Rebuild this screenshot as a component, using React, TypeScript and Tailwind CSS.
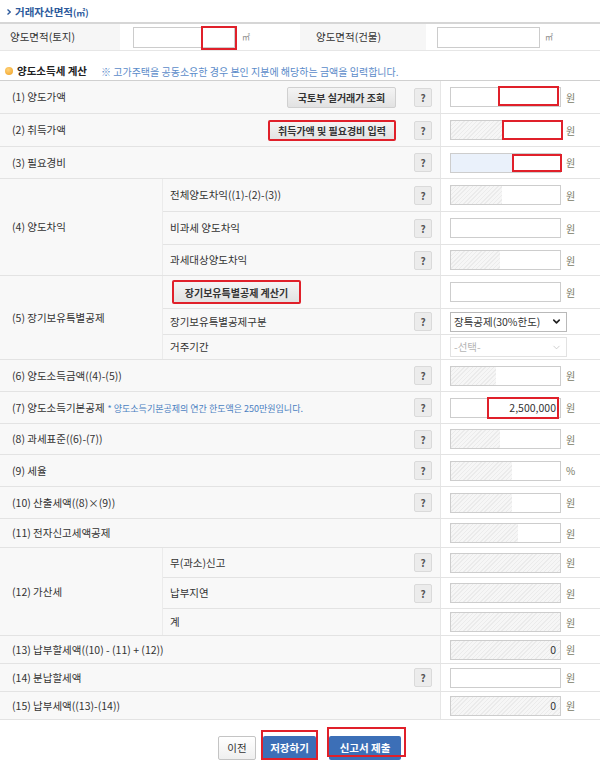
import { ChevronDown } from "lucide-react";
import type { ReactNode } from "react";

type Kind = "white" | "blue" | "part" | "full";

// red annotation box drawn on top of an input
function Mark({ cls }: { cls: string }) {
  return <div className={`absolute border-2 border-[#e0202a] ${cls}`} />;
}

function Field({
  kind = "white",
  value,
  unit = "원",
  gap = "w-[60px]",
  mark,
}: {
  kind?: Kind;
  value?: string;
  unit?: string;
  gap?: string;
  mark?: ReactNode;
}) {
  const bg =
    kind === "blue"
      ? "bg-[#eaf1fb]"
      : kind === "white"
        ? "bg-white"
        : "bg-[repeating-linear-gradient(135deg,#ebebeb_0px,#ebebeb_1px,#f6f6f6_1px,#f6f6f6_3px)]";
  return (
    <div className="flex items-center pl-[9px]">
      <div className={`relative w-[111px] h-[20px] border border-[#cdcdcd] ${bg}`}>
        {kind === "part" && <div className={`absolute right-0 top-0 h-full bg-white ${gap}`} />}
        {value && (
          <span className="absolute right-[4px] top-0 leading-[18px] text-[10.5px] text-[#333]">{value}</span>
        )}
        {mark}
      </div>
      <span className="ml-[5px] text-[10px] text-[#7a7a66]">{unit}</span>
    </div>
  );
}

function Help({ show = true }: { show?: boolean }) {
  return (
    <div className="w-[35px] flex items-center pl-[9px]">
      {show && (
        <div className="w-[18px] h-[19px] bg-[#ececec] border border-[#dadada] rounded-[2px] flex items-center justify-center text-[10px] font-bold text-[#555]">
          ?
        </div>
      )}
    </div>
  );
}

function GrayBtn({ children, cls }: { children: ReactNode; cls: string }) {
  return (
    <div
      className={`h-[21px] flex items-center justify-center rounded-[2px] bg-gradient-to-b from-[#f4f4f4] to-[#e2e2e2] text-[10px] font-bold text-[#333] ${cls}`}
    >
      {children}
    </div>
  );
}

function Row({
  h,
  label,
  right,
  help = true,
  field,
}: {
  h: string;
  label: ReactNode;
  right?: ReactNode;
  help?: boolean;
  field: ReactNode;
}) {
  return (
    <div className={`flex border-b border-[#e3e3e3] ${h}`}>
      <div className="w-[405px] flex items-center justify-between pl-[12px] pr-[9px] bg-[#f8f8f8]">
        <span>{label}</span>
        {right}
      </div>
      <div className="flex bg-[#f8f8f8]">
        <Help show={help} />
      </div>
      <div className="flex-1 flex items-center border-l border-[#e6e6e6] bg-white">{field}</div>
    </div>
  );
}

type Sub = { h: string; label?: ReactNode; help?: boolean; field: ReactNode };

function Group({ label, subs }: { label: string; subs: Sub[] }) {
  return (
    <div className="flex border-b border-[#e3e3e3]">
      <div className="w-[163px] flex items-center pl-[12px] bg-[#f8f8f8] border-r border-[#ebebeb]">{label}</div>
      <div className="flex-1 flex flex-col">
        {subs.map((s, i) => (
          <div key={i} className={`flex ${s.h} ${i < subs.length - 1 ? "border-b border-[#e3e3e3]" : ""}`}>
            <div className="w-[242px] flex items-center pl-[7px] bg-[#f8f8f8]">{s.label}</div>
            <div className="flex bg-[#f8f8f8]">
              <Help show={s.help !== false} />
            </div>
            <div className="flex-1 flex items-center border-l border-[#e6e6e6] bg-white">{s.field}</div>
          </div>
        ))}
      </div>
    </div>
  );
}

function Select({ text, disabled }: { text: string; disabled?: boolean }) {
  return (
    <div className="pl-[9px]">
      <div
        className={`w-[117px] h-[20px] border flex items-center justify-between pl-[3px] pr-[4px] text-[10.5px] ${
          disabled ? "border-[#e2e2e2] text-[#b5b5b5] bg-white" : "border-[#b9b9b9] text-[#333] bg-white"
        }`}
      >
        <span>{text}</span>
        {disabled ? (
          <ChevronDown size={11} strokeWidth={1.5} color="#bbbbbb" />
        ) : (
          <ChevronDown size={11} strokeWidth={3.5} color="#222222" />
        )}
      </div>
    </div>
  );
}

export default function App() {
  return (
    <div className="w-[600px] min-h-[764px] bg-white font-['Noto_Sans_CJK_KR','Noto_Sans',sans-serif] text-[10.5px] text-[#333]">
      {/* 거래자산면적 */}
      <div className="h-[22px] flex items-center pl-[7px] gap-[4px] pt-[1px]">
        <svg width="4" height="6" viewBox="0 0 4 6">
          <path d="M0.5 0.5 L3.2 3 L0.5 5.5" stroke="#2d5a9c" strokeWidth="1.3" fill="none" />
        </svg>
        <span className="font-bold text-[#2d5a9c] text-[10.5px]">
          거래자산면적<span className="text-[9px]">(㎡)</span>
        </span>
      </div>
      <div className="flex h-[29px] border-t-2 border-b border-[#d6d6d6] border-b-[#e6e6e6]">
        <div className="w-[120px] flex items-center pl-[10px] bg-[#f6f6f6]">양도면적(토지)</div>
        <div className="w-[180px] flex items-center pl-[13px]">
          <div className="relative w-[102px] h-[21px] border border-[#cccccc]">
            <Mark cls="left-[67px] -top-[2px] w-[36px] h-[24px]" />
          </div>
          <span className="ml-[7px] text-[8px] text-[#888]">㎡</span>
        </div>
        <div className="w-[126px] flex items-center pl-[16px] bg-[#f6f6f6]">양도면적(건물)</div>
        <div className="flex-1 flex items-center pl-[11px]">
          <div className="w-[103px] h-[21px] border border-[#cccccc]" />
          <span className="ml-[5px] text-[8px] text-[#888]">㎡</span>
        </div>
      </div>

      {/* 양도소득세 계산 */}
      <div className="h-[29px] flex items-end pb-[1px] pl-[5px]">
        <div className="flex items-center h-[16px]">
          <div className="w-[8px] h-[8px] rounded-full bg-[radial-gradient(circle_at_40%_35%,#ffd27a,#f0a020)] mr-[4px]" />
          <span className="font-bold text-[10.5px] text-[#222]">양도소득세 계산</span>
          <span className="ml-[14px] text-[10px] text-[#5b8bc9]">
            ※ 고가주택을 공동소유한 경우 본인 지분에 해당하는 금액을 입력합니다.
          </span>
        </div>
      </div>

      <div className="border-t border-[#d0d0d0]">
        <Row
          h="h-[33px]"
          label="(1) 양도가액"
          right={<GrayBtn cls="w-[109px] border border-[#d0d0d0]">국토부 실거래가 조회</GrayBtn>}
          field={<Field mark={<Mark cls="left-[47px] -top-[2px] w-[61px] h-[20px]" />} />}
        />
        <Row
          h="h-[33px]"
          label="(2) 취득가액"
          right={<GrayBtn cls="w-[128px] border-2 border-[#e0202a]">취득가액 및 필요경비 입력</GrayBtn>}
          field={<Field kind="full" mark={<Mark cls="left-[51px] -top-[1px] w-[61px] h-[20px] bg-white" />} />}
        />
        <Row
          h="h-[32px]"
          label="(3) 필요경비"
          field={<Field kind="blue" mark={<Mark cls="left-[61px] top-[0px] w-[50px] h-[18px] bg-white" />} />}
        />
        <Group
          label="(4) 양도차익"
          subs={[
            { h: "h-[33px]", label: "전체양도차익((1)-(2)-(3))", field: <Field kind="part" gap="w-[58px]" /> },
            { h: "h-[33px]", label: "비과세 양도차익", field: <Field /> },
            { h: "h-[30px]", label: "과세대상양도차익", field: <Field kind="part" gap="w-[60px]" /> },
          ]}
        />
        <Group
          label="(5) 장기보유특별공제"
          subs={[
            {
              h: "h-[33px]",
              label: (
                <GrayBtn cls="w-[129px] h-[24px] border-2 border-[#e0202a] ml-[2px]">장기보유특별공제 계산기</GrayBtn>
              ),
              help: false,
              field: <Field />,
            },
            { h: "h-[26px]", label: "장기보유특별공제구분", field: <Select text="장특공제(30%한도)" /> },
            { h: "h-[24px]", label: "거주기간", help: false, field: <Select text="-선택-" disabled /> },
          ]}
        />
        <Row h="h-[32px]" label="(6) 양도소득금액((4)-(5))" field={<Field kind="part" gap="w-[64px]" />} />
        <Row
          h="h-[32px]"
          label={
            <>
              (7) 양도소득기본공제
              <span className="ml-[3px] text-[9px] text-[#4a7fc1]">* 양도소득기본공제의 연간 한도액은 250만원입니다.</span>
            </>
          }
          field={
            <Field
              value="2,500,000"
              mark={<Mark cls="left-[36px] -top-[2px] w-[72px] h-[22px]" />}
            />
          }
        />
        <Row h="h-[31px]" label="(8) 과세표준((6)-(7))" field={<Field kind="part" gap="w-[60px]" />} />
        <Row h="h-[32px]" label="(9) 세율" field={<Field kind="part" gap="w-[48px]" unit="%" />} />
        <Row h="h-[32px]" label="(10) 산출세액((8)×(9))" field={<Field kind="part" gap="w-[48px]" />} />
        <Row h="h-[29px]" label="(11) 전자신고세액공제" help={false} field={<Field kind="part" gap="w-[42px]" />} />
        <Group
          label="(12) 가산세"
          subs={[
            { h: "h-[30px]", label: "무(과소)신고", field: <Field kind="full" /> },
            { h: "h-[31px]", label: "납부지연", field: <Field kind="full" /> },
            { h: "h-[26px]", label: "계", help: false, field: <Field kind="full" /> },
          ]}
        />
        <Row h="h-[28px]" label="(13) 납부할세액((10) - (11) + (12))" help={false} field={<Field kind="full" value="0" />} />
        <Row h="h-[28px]" label="(14) 분납할세액" field={<Field />} />
        <Row h="h-[28px]" label="(15) 납부세액((13)-(14))" help={false} field={<Field kind="full" value="0" />} />
      </div>

      {/* 버튼 */}
      <div className="flex items-start pl-[218px] pt-[16px] gap-[7px]">
        <div className="w-[38px] h-[24px] border border-[#c4c4c4] rounded-[2px] bg-gradient-to-b from-white to-[#efefef] flex items-center justify-center text-[10.5px] text-[#333]">
          이전
        </div>
        <div className="relative">
          <div className="w-[53px] h-[24px] rounded-[2px] bg-[#3c6fb7] flex items-center justify-center text-[10.5px] font-bold text-white">
            저장하기
          </div>
          <div className="absolute -left-[2px] -top-[6px] w-[57px] h-[30px] border-2 border-[#e0202a]" />
        </div>
        <div className="relative ml-[6px]">
          <div className="w-[72px] h-[24px] rounded-[2px] bg-[#3c6fb7] flex items-center justify-center text-[10.5px] font-bold text-white">
            신고서 제출
          </div>
          <div className="absolute -left-[2px] -top-[9px] w-[79px] h-[30px] border-2 border-[#e0202a]" />
        </div>
      </div>
    </div>
  );
}
